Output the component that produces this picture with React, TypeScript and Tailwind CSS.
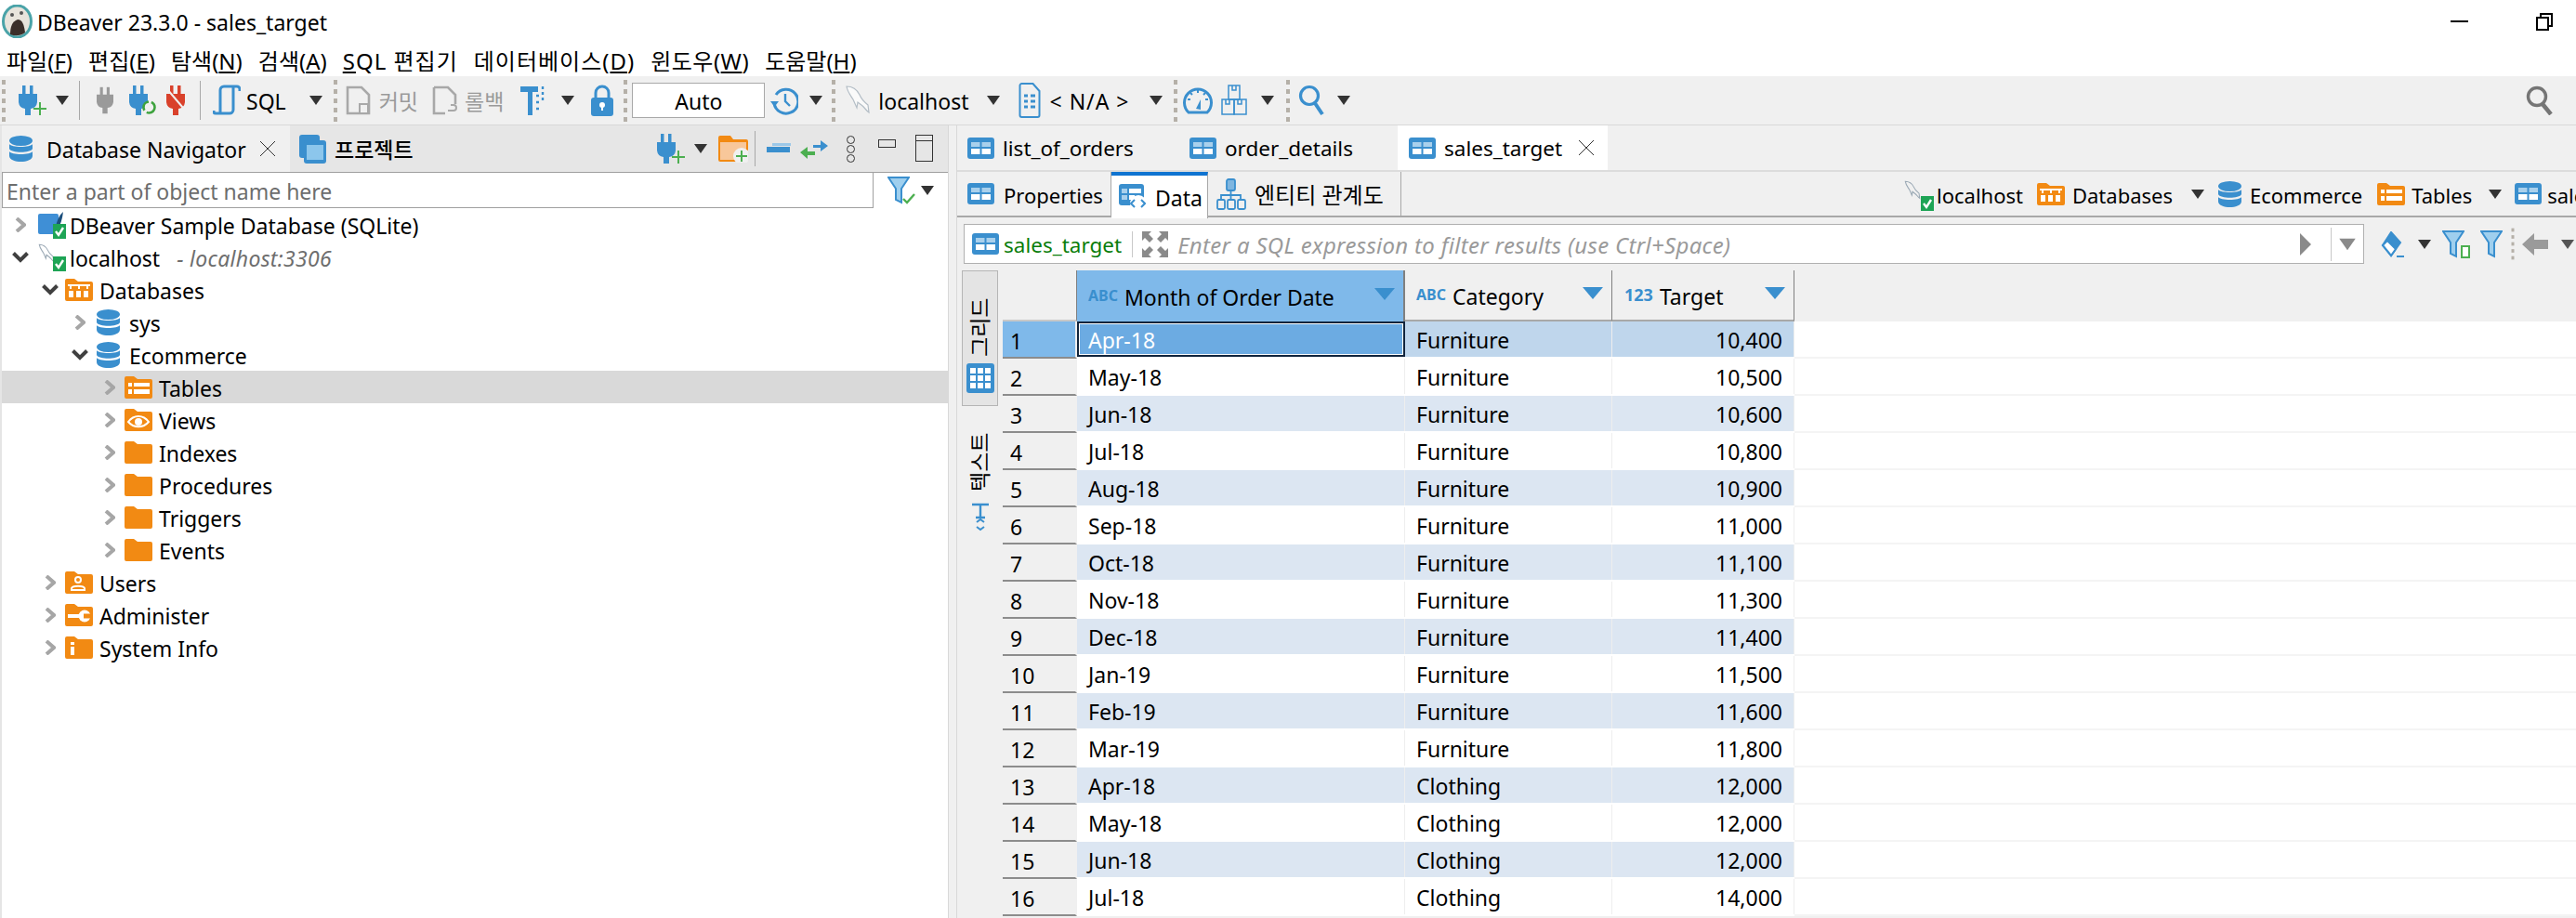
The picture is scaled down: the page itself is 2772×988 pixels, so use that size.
import React from 'react';

// --- small drawn icons ---
const Caret = ({ className = '', color = '#333' }: { className?: string; color?: string }) => (
  <svg width="16" height="12" viewBox="0 0 16 12" className={`shrink-0 ${className}`}>
    <path d="M1 1h14L8 11z" fill={color} />
  </svg>
);

const Grip = ({ className = '' }: { className?: string }) => (
  <div className={`flex flex-col gap-[5px] shrink-0 ${className}`}>
    {[0, 1, 2, 3, 4].map((i) => (
      <div key={i} className="w-[4px] h-[5px] bg-[#b5b0a8]" />
    ))}
  </div>
);

const Sep = ({ className = '' }: { className?: string }) => (
  <div className={`w-px h-[42px] bg-[#a8a8a8] shrink-0 ${className}`} />
);

const TableIcon = ({ className = '' }: { className?: string }) => (
  <svg width="29" height="23" viewBox="0 0 29 23" className={`shrink-0 ${className}`}>
    <rect width="29" height="23" rx="3" fill="#3a8fce" />
    <rect x="4" y="5" width="9.5" height="5" fill="#a9d0ec" />
    <rect x="15.5" y="5" width="9.5" height="5" fill="#a9d0ec" />
    <rect x="4" y="12" width="9.5" height="6" fill="#fff" />
    <rect x="15.5" y="12" width="9.5" height="6" fill="#fff" />
  </svg>
);

const DbStack = ({ className = '' }: { className?: string }) => (
  <svg width="25" height="28" viewBox="0 0 25 28" className={`shrink-0 ${className}`}>
    <ellipse cx="12.5" cy="5.5" rx="12.5" ry="5.5" fill="#3a8fce" />
    <path d="M0 9c2 4 23 4 25 0v5c-2 5-23 5-25 0z" fill="#3a8fce" />
    <path d="M0 17c2 4 23 4 25 0v5c-1 8-24 8-25 0z" fill="#3a8fce" />
  </svg>
);

const Plug = ({ color = '#3a8fce', className = '' }: { color?: string; className?: string }) => (
  <svg width="20" height="32" viewBox="0 0 20 32" className={`shrink-0 ${className}`}>
    <rect x="4" y="0" width="3.5" height="10" fill={color} />
    <rect x="12" y="0" width="3.5" height="10" fill={color} />
    <path d="M0 9h20v9a8 8 0 01-7 7v7H7v-7a8 8 0 01-7-7z" fill={color} />
  </svg>
);

const Dolphin = ({ className = '' }: { className?: string }) => (
  <svg width="28" height="34" viewBox="0 0 28 34" fill="none" className={`shrink-0 ${className}`}>
    <path d="M2 2c6 0 11 3 14 9 2 5 4 7 9 11l1 8c-3-2-5-6-8-8l-4-3-1 6-4-9C6 11 3 8 2 2z" stroke="#9aa8b4" strokeWidth="1.2" fill="#fff" />
  </svg>
);

const GreenBadge = ({ className = '' }: { className?: string }) => (
  <svg width="14" height="16" viewBox="0 0 14 16" className={`absolute ${className}`}>
    <rect width="14" height="16" fill="#1ea455" />
    <path d="M3 8l3 4 5-8" stroke="#fff" strokeWidth="2.4" fill="none" />
  </svg>
);

const Folder = ({ children }: { children?: React.ReactNode }) => (
  <svg width="30" height="24" viewBox="0 0 30 24" className="shrink-0">
    <path d="M0 2a2 2 0 012-2h8l4 3h14a2 2 0 012 2v17a2 2 0 01-2 2H2a2 2 0 01-2-2z" fill="#f28a13" />
    {children}
  </svg>
);

const FolderInner: Record<string, React.ReactNode> = {
  databases: (
    <g fill="#fff">
      <rect x="3" y="6" width="24" height="2" />
      <rect x="5" y="8" width="2" height="3" />
      <rect x="14" y="8" width="2" height="3" />
      <rect x="23" y="8" width="2" height="3" />
      <rect x="4" y="13" width="5" height="7" />
      <rect x="12" y="13" width="5" height="7" />
      <rect x="20" y="13" width="5" height="7" />
    </g>
  ),
  tables: (
    <g fill="#fff">
      <rect x="4" y="7" width="4" height="4" />
      <rect x="10" y="7" width="17" height="4" />
      <rect x="4" y="14" width="4" height="5" />
      <rect x="10" y="14" width="17" height="5" />
    </g>
  ),
  views: (
    <g fill="none" stroke="#fff" strokeWidth="2">
      <path d="M4 14c6-8 16-8 22 0-6 7-16 7-22 0z" />
      <circle cx="15" cy="14" r="3" fill="#fff" />
    </g>
  ),
  users: (
    <g fill="none" stroke="#fff" strokeWidth="2">
      <circle cx="14" cy="9" r="3" />
      <path d="M7 20v-2c1-3 13-3 14 0v2z" />
    </g>
  ),
  admin: (
    <g>
      <rect x="3" y="11" width="14" height="4" fill="#fff" />
      <circle cx="21" cy="13" r="6.5" fill="#fff" />
      <rect x="20" y="10.5" width="10" height="5" fill="#f28a13" />
    </g>
  ),
  info: (
    <g fill="#fff">
      <rect x="6" y="6" width="4" height="3" />
      <rect x="6" y="11" width="4" height="9" />
    </g>
  ),
};

const ChevronR = () => (
  <svg width="12" height="16" viewBox="0 0 12 16" fill="none" className="shrink-0 ml-[2px]">
    <path d="M2 1l8 7-8 7" stroke="#a6a6a6" strokeWidth="4" />
  </svg>
);

const ChevronD = () => (
  <svg width="18" height="12" viewBox="0 0 18 12" fill="none" className="shrink-0 -ml-[1px]">
    <path d="M1.5 1.5L9 9l7.5-7.5" stroke="#404040" strokeWidth="4" />
  </svg>
);

const FilterIcon = ({ className = '' }: { className?: string }) => (
  <svg width="24" height="30" viewBox="0 0 24 30" className={`shrink-0 ${className}`}>
    <path d="M1 1h22l-8 12v15l-6-3V13z" fill="#9fcfee" stroke="#3a8fce" strokeWidth="2" />
  </svg>
);

const Mnem = ({ label, k, className = '' }: { label: string; k: string; className?: string }) => (
  <span className={`whitespace-nowrap ${className}`}>
    {label}(<span className="underline underline-offset-2">{k}</span>)
  </span>
);

// --- tree data ---
type Node = { label: string; level: number; open?: boolean; kind: string; selected?: boolean; sub?: string };
const tree: Node[] = [
  { label: 'DBeaver Sample Database (SQLite)', level: 1, kind: 'sqlite' },
  { label: 'localhost', level: 1, open: true, kind: 'mysql', sub: '- localhost:3306' },
  { label: 'Databases', level: 2, open: true, kind: 'databases' },
  { label: 'sys', level: 3, kind: 'db' },
  { label: 'Ecommerce', level: 3, open: true, kind: 'db' },
  { label: 'Tables', level: 4, kind: 'tables', selected: true },
  { label: 'Views', level: 4, kind: 'views' },
  { label: 'Indexes', level: 4, kind: 'plain' },
  { label: 'Procedures', level: 4, kind: 'plain' },
  { label: 'Triggers', level: 4, kind: 'plain' },
  { label: 'Events', level: 4, kind: 'plain' },
  { label: 'Users', level: 2, kind: 'users' },
  { label: 'Administer', level: 2, kind: 'admin' },
  { label: 'System Info', level: 2, kind: 'info' },
];

const indent: Record<number, string> = { 1: 'pl-[12px]', 2: 'pl-[44px]', 3: 'pl-[76px]', 4: 'pl-[108px]' };

const rows: [string, string, string][] = [
  ['Apr-18', 'Furniture', '10,400'],
  ['May-18', 'Furniture', '10,500'],
  ['Jun-18', 'Furniture', '10,600'],
  ['Jul-18', 'Furniture', '10,800'],
  ['Aug-18', 'Furniture', '10,900'],
  ['Sep-18', 'Furniture', '11,000'],
  ['Oct-18', 'Furniture', '11,100'],
  ['Nov-18', 'Furniture', '11,300'],
  ['Dec-18', 'Furniture', '11,400'],
  ['Jan-19', 'Furniture', '11,500'],
  ['Feb-19', 'Furniture', '11,600'],
  ['Mar-19', 'Furniture', '11,800'],
  ['Apr-18', 'Clothing', '12,000'],
  ['May-18', 'Clothing', '12,000'],
  ['Jun-18', 'Clothing', '12,000'],
  ['Jul-18', 'Clothing', '14,000'],
];

const TreeRow = ({ n }: { n: Node }) => (
  <div className={`h-[35px] flex items-center ${indent[n.level]} ${n.selected ? 'bg-[#d9d9d9]' : ''}`}>
    <div className="w-[24px] flex shrink-0">{n.open ? <ChevronD /> : <ChevronR />}</div>
    {n.kind === 'sqlite' && (
      <div className="relative w-[30px] h-[30px] ml-[3px] shrink-0">
        <svg width="28" height="26" viewBox="0 0 28 26">
          <rect y="3" width="22" height="22" rx="2" fill="#3f8fd6" />
          <path d="M18 20c2-8 4-15 9-19-1 8-3 14-6 19z" fill="#1c4f7c" />
        </svg>
        <GreenBadge className="right-0 bottom-0" />
      </div>
    )}
    {n.kind === 'mysql' && (
      <div className="relative w-[30px] h-[30px] ml-[3px] shrink-0">
        <svg width="18" height="22" viewBox="0 0 28 34" fill="none">
          <path d="M2 2c6 0 11 3 14 9 2 5 4 7 9 11l1 8c-3-2-5-6-8-8l-4-3-1 6-4-9C6 11 3 8 2 2z" stroke="#9aa8b4" strokeWidth="1.6" />
        </svg>
        <GreenBadge className="right-0 bottom-0" />
      </div>
    )}
    {n.kind === 'db' && <DbStack className="ml-[2px]" />}
    {['databases', 'tables', 'views', 'users', 'admin', 'info'].includes(n.kind) && (
      <Folder>{FolderInner[n.kind]}</Folder>
    )}
    {n.kind === 'plain' && <Folder />}
    <span className={`whitespace-nowrap ${n.level === 3 ? 'ml-[10px]' : n.level === 1 ? 'ml-[4px]' : 'ml-[7px]'}`}>{n.label}</span>
    {n.sub && <span className="ml-[18px] italic tracking-[0.3px] text-[#6e6e6e] whitespace-nowrap">{n.sub}</span>}
  </div>
);

export default function App() {
  return (
    <div className="w-[2772px] h-[988px] overflow-hidden flex flex-col bg-white text-[23px] leading-none text-black font-['Noto_Sans','Noto_Sans_CJK_KR',sans-serif] [&_span]:pt-[3px]">
      {/* Title bar */}
      <div className="h-[46px] flex items-center shrink-0 pl-[2px]">
        <svg width="33" height="36" viewBox="0 0 33 36" className="shrink-0">
          <ellipse cx="16.5" cy="18" rx="15" ry="17" fill="#e8e4dc" stroke="#4aa3a8" strokeWidth="3" />
          <path d="M9 32c0-8 2-14 8-16 5 0 7 6 8 14-5 4-11 4-16 2z" fill="#3b2f2a" />
          <circle cx="11" cy="11" r="2" fill="#555" />
          <circle cx="21" cy="9" r="2" fill="#555" />
        </svg>
        <span className="ml-[5px]">DBeaver 23.3.0 - sales_target</span>
        <div className="flex-1" />
        <div className="w-[19px] h-[2px] bg-black" />
        <div className="relative w-[18px] h-[19px] ml-[73px] mr-[25px]">
          <div className="absolute top-0 right-0 w-[14px] h-[15px] border-2 border-black" />
          <div className="absolute bottom-0 left-0 w-[14px] h-[15px] border-2 border-black bg-white" />
        </div>
      </div>

      {/* Menu bar */}
      <div className="h-[36px] flex items-center gap-[17px] pl-[7px] shrink-0 text-[24px]">
        <Mnem label="파일" k="F" />
        <Mnem label="편집" k="E" />
        <Mnem label="탐색" k="N" />
        <Mnem label="검색" k="A" />
        <span className="whitespace-nowrap tracking-[1px]"><span className="underline underline-offset-2">S</span>QL 편집기</span>
        <Mnem label="데이터베이스" k="D" className="tracking-[1px]" />
        <Mnem label="윈도우" k="W" className="tracking-[0.5px]" />
        <Mnem label="도움말" k="H" />
      </div>

      {/* Main toolbar */}
      <div className="h-[53px] flex items-center bg-[#f0f0f0] border-b border-[#d8d8d8] shrink-0">
        <Grip className="ml-[2px]" />
        <div className="relative ml-[14px] w-[30px] h-[32px]">
          <Plug />
          <svg width="14" height="14" viewBox="0 0 14 14" className="absolute right-0 bottom-0">
            <path d="M7 0v14M0 7h14" stroke="#4caf50" strokeWidth="2" />
          </svg>
        </div>
        <Caret className="ml-[9px]" />
        <Sep className="ml-[10px]" />
        <Plug color="#9a9a9a" className="ml-[17px] scale-90" />
        <div className="relative ml-[16px] w-[30px] h-[32px]">
          <Plug />
          <svg width="17" height="17" viewBox="0 0 17 17" fill="none" className="absolute right-0 bottom-0">
            <circle cx="8.5" cy="8.5" r="6" stroke="#3ea33e" strokeWidth="2.6" strokeDasharray="12 3" fill="#f0f0f0" />
          </svg>
        </div>
        <div className="relative ml-[10px] w-[24px] h-[32px]">
          <Plug color="#d9412b" />
          <svg width="24" height="32" viewBox="0 0 24 32" fill="none" className="absolute inset-0">
            <path d="M1 4l22 26" stroke="#f0f0f0" strokeWidth="2" />
          </svg>
        </div>
        <Sep className="ml-[12px]" />
        <svg width="30" height="34" viewBox="0 0 30 34" fill="none" className="ml-[13px] shrink-0">
          <path d="M8 31V6a4 4 0 014-4h14a3 3 0 013 3v2M22 3v24a4 4 0 01-4 4H3a2 2 0 01-2-2v-1" stroke="#3a8fce" strokeWidth="3" />
        </svg>
        <span className="ml-[6px]">SQL</span>
        <Caret className="ml-[24px]" />
        <Grip className="ml-[11px]" />
        <svg width="27" height="32" viewBox="0 0 27 32" fill="none" className="ml-[9px] shrink-0">
          <path d="M2 2h15l8 8v20H2z" stroke="#a8a8a8" strokeWidth="2.6" />
          <rect x="15" y="20" width="9" height="10" fill="#f0f0f0" stroke="#a8a8a8" strokeWidth="2" />
        </svg>
        <span className="ml-[9px] text-[#9a9a9a]">커밋</span>
        <svg width="28" height="32" viewBox="0 0 28 32" fill="none" className="ml-[15px] shrink-0">
          <path d="M2 2h15l8 8v10M2 2v28h12" stroke="#a8a8a8" strokeWidth="2.6" />
          <path d="M17 27h6a3 3 0 000-6h-3" stroke="#a8a8a8" strokeWidth="2" />
        </svg>
        <span className="ml-[7px] text-[#9a9a9a]">롤백</span>
        <svg width="29" height="34" viewBox="0 0 29 34" className="ml-[18px] shrink-0">
          <path d="M0 2h19v6h-6v25H8V8H0z" fill="#3a8fce" />
          <path d="M17 12h3M24 2v3M24 8v3M24 14v3M17 19h3M17 26h3" stroke="#3a8fce" strokeWidth="2.4" />
        </svg>
        <Caret className="ml-[14px]" />
        <svg width="24" height="34" viewBox="0 0 24 34" className="ml-[17px] shrink-0">
          <path d="M5 15V9a7 7 0 0114 0v6" fill="none" stroke="#3a8fce" strokeWidth="3" />
          <rect y="14" width="24" height="20" rx="3" fill="#3a8fce" />
          <circle cx="12" cy="22" r="3" fill="#fff" />
          <rect x="11" y="23" width="2" height="5" fill="#fff" />
        </svg>
        <Grip className="ml-[11px]" />
        <div className="ml-[5px] w-[143px] h-[38px] pt-[3px] bg-white border border-[#a8a8a8] flex items-center justify-center shrink-0">Auto</div>
        <svg width="30" height="32" viewBox="0 0 30 32" fill="none" className="ml-[6px] shrink-0">
          <path d="M6 10a13 13 0 11-2 9" stroke="#3a8fce" strokeWidth="3" />
          <path d="M0 17h9l-4.500 6z" fill="#3a8fce" />
          <path d="M16 9v8l5 5" stroke="#3a8fce" strokeWidth="2.4" />
        </svg>
        <Caret className="ml-[11px]" />
        <Grip className="ml-[9px]" />
        <Dolphin className="ml-[10px] opacity-70" />
        <span className="ml-[8px]">localhost</span>
        <Caret className="ml-[18px]" />
        <svg width="24" height="38" viewBox="0 0 24 38" fill="none" className="ml-[19px] shrink-0">
          <path d="M1.500 3a2 2 0 012-2h12l7 8v26a2 2 0 01-2 2h-17a2 2 0 01-2-2z" stroke="#3a8fce" strokeWidth="2" />
          <path d="M6 14h4M13 14h5M6 20h4M13 20h5M6 26h4M13 26h5" stroke="#3a8fce" strokeWidth="3" />
        </svg>
        <span className="ml-[10px] whitespace-pre tracking-[1px]">{'< N/A >'}</span>
        <Caret className="ml-[20px]" />
        <Grip className="ml-[11px]" />
        <svg width="32" height="30" viewBox="0 0 32 30" fill="none" className="ml-[6px] shrink-0">
          <path d="M6 28a14.500 14.500 0 1120 0z" stroke="#3a8fce" strokeWidth="3" />
          <path d="M14 24l5-10 0 11z" fill="#3a8fce" />
          <path d="M16 4v3M5 14h3M24 14h3M8 7l2 2M24 7l-2 2" stroke="#3a8fce" strokeWidth="2" />
        </svg>
        <svg width="28" height="34" viewBox="0 0 28 34" fill="none" stroke="#3a8fce" strokeWidth="1.5" className="ml-[9px] shrink-0">
          <rect x="8" y="1" width="12" height="15" />
          <rect x="1" y="16" width="13" height="16" />
          <rect x="14" y="16" width="13" height="16" />
          <path d="M12 1v5h4V1M5 16v5h4v-5M18 16v5h4v-5" />
        </svg>
        <Caret className="ml-[14px]" />
        <Grip className="ml-[12px]" />
        <svg width="28" height="34" viewBox="0 0 28 34" fill="none" stroke="#3a8fce" className="ml-[9px] shrink-0">
          <circle cx="12" cy="12" r="9.500" strokeWidth="3.200" />
          <path d="M18 20l8 12" strokeWidth="4" />
        </svg>
        <Caret className="ml-[13px]" />
        <div className="flex-1" />
        <svg width="30" height="32" viewBox="0 0 30 32" fill="none" stroke="#757575" className="mr-[24px] shrink-0">
          <circle cx="12" cy="12" r="9.500" strokeWidth="3.400" />
          <path d="M18 20l9 11" strokeWidth="4.500" />
        </svg>
      </div>

      <div className="flex-1 flex min-h-0">
        {/* Left navigator */}
        <div className="w-[1021px] shrink-0 flex flex-col border-r border-[#d8d8d8] border-l-2 border-l-[#e5e5e5]">
          <div className="h-[51px] shrink-0 flex items-center bg-[#e6e6e6] border-b border-[#a0a0a0]">
            <div className="w-[310px] h-full bg-[#f0f0f0] flex items-center shrink-0">
              <DbStack className="ml-[8px]" />
              <span className="ml-[15px]">Database Navigator</span>
              <svg width="18" height="18" viewBox="0 0 18 18" className="ml-[14px]">
                <path d="M1 1l16 16M17 1L1 17" stroke="#333" strokeWidth="1" />
              </svg>
            </div>
            <svg width="29" height="31" viewBox="0 0 29 31" className="ml-[10px] shrink-0">
              <rect x="0" y="0" width="22" height="25" rx="3" fill="#3a8fce" />
              <rect x="5" y="6" width="24" height="25" rx="3" fill="#3a8fce" />
              <rect x="8" y="11" width="18" height="16" fill="#8cc6ec" />
            </svg>
            <span className="ml-[9px] font-medium">프로젝트</span>
            <div className="flex-1" />
            <div className="relative w-[30px] h-[32px] shrink-0">
              <Plug />
              <svg width="14" height="14" viewBox="0 0 14 14" className="absolute right-0 bottom-0">
                <path d="M7 0v14M0 7h14" stroke="#4caf50" strokeWidth="2" />
              </svg>
            </div>
            <Caret className="ml-[9px]" />
            <div className="relative ml-[11px] w-[32px] h-[30px] shrink-0">
              <svg width="32" height="30" viewBox="0 0 32 30">
                <path d="M0 3a2 2 0 012-2h11l3 4h14a2 2 0 012 2v20a2 2 0 01-2 2H2a2 2 0 01-2-2z" fill="#f28a13" />
                <rect x="2" y="8" width="28" height="19" fill="#f8c79a" />
                <circle cx="25" cy="23" r="9" fill="#f0f0f0" />
                <path d="M25 17v12M19 23h12" stroke="#4caf50" strokeWidth="2" />
              </svg>
            </div>
            <div className="ml-[7px] w-px h-[38px] bg-[#a8a8a8]" />
            <svg width="26" height="12" viewBox="0 0 26 12" className="ml-[12px] shrink-0">
              <rect y="4" width="25" height="6" fill="#3a8fce" />
              <rect x="6" y="0" width="20" height="3" fill="#9cc8e8" />
            </svg>
            <svg width="30" height="24" viewBox="0 0 30 24" className="ml-[10px] shrink-0">
              <path d="M14 8h8V3l8 6-8 6v-4h-8z" fill="#3a8fce" />
              <path d="M16 15H8v-5L0 16l8 7v-4h8z" fill="#4caf50" />
            </svg>
            <div className="ml-[20px] flex flex-col gap-[1px] shrink-0">
              {[0, 1, 2].map((i) => (
                <div key={i} className="w-[9px] h-[9px] rounded-full border border-[#333]" />
              ))}
            </div>
            <div className="ml-[25px] mb-[12px] w-[19px] h-[9px] border border-[#333] shrink-0" />
            <div className="ml-[21px] mb-[2px] mr-[16px] w-[19px] h-[29px] border border-[#333] shrink-0">
              <div className="h-[6px] border-b border-[#333]" />
            </div>
          </div>
          <div className="h-[38px] shrink-0 flex items-center">
            <div className="w-[938px] h-full bg-white border border-[#a0a0a0] border-t-0 flex items-center pl-[4px] pt-[3px] text-[#6d6d6d] shrink-0">
              Enter a part of object name here
            </div>
            <div className="relative ml-[15px] w-[30px] h-[30px] shrink-0">
              <FilterIcon />
              <svg width="14" height="12" viewBox="0 0 14 12" fill="none" className="absolute right-0 bottom-0">
                <path d="M1 6l4 4 8-9" stroke="#4caf50" strokeWidth="2.400" />
              </svg>
            </div>
            <Caret className="ml-[5px]" />
          </div>
          <div className="flex-1 bg-white">
            {tree.map((n) => (
              <TreeRow key={n.label} n={n} />
            ))}
          </div>
        </div>

        <div className="w-[8px] shrink-0 bg-[#f0f0f0]" />

        {/* Right editor */}
        <div className="flex-1 min-w-0 flex flex-col bg-[#f0f0f0] border-l border-[#d8d8d8]">
          <div className="h-[50px] shrink-0 flex border-b-2 border-[#dcdcdc] text-[22.500px]">
            <div className="flex items-center pl-[11px] w-[250px] shrink-0">
              <TableIcon />
              <span className="ml-[9px]">list_of_orders</span>
            </div>
            <div className="flex items-center w-[224px] shrink-0">
              <TableIcon />
              <span className="ml-[9px]">order_details</span>
            </div>
            <div className="flex items-center bg-white w-[226px] pl-[12px] shrink-0">
              <TableIcon />
              <span className="ml-[9px] w-[132px]">sales_target</span>
              <svg width="18" height="18" viewBox="0 0 18 18" className="ml-[12px]">
                <path d="M1 1l16 16M17 1L1 17" stroke="#333" strokeWidth="1" />
              </svg>
            </div>
          </div>
          <div className="h-[49px] shrink-0 flex border-b-2 border-[#a8a8a8] whitespace-nowrap">
            <div className="flex items-center pl-[11px] w-[166px] shrink-0 border-r border-[#a8a8a8] text-[22px]">
              <TableIcon />
              <span className="ml-[10px]">Properties</span>
            </div>
            <div className="flex items-center pl-[8px] w-[104px] h-[50px] shrink-0 bg-white border-r border-[#a8a8a8] border-t-4 border-t-[#0f74d1]">
              <svg width="29" height="28" viewBox="0 0 29 28" className="shrink-0">
                <rect width="27" height="23" rx="3" fill="#3a8fce" />
                <rect x="11" y="5" width="13" height="5" fill="#fff" />
                <rect x="11" y="12" width="6" height="5" fill="#fff" />
                <rect x="3" y="5" width="6" height="5" fill="#a9d0ec" />
                <rect x="3" y="12" width="6" height="5" fill="#a9d0ec" />
                <circle cx="21" cy="21" r="9" fill="#fff" />
                <path d="M17 17l-4 4 4 4M24 17l4 4-4 4" stroke="#3a8fce" strokeWidth="2" fill="none" />
              </svg>
              <span className="ml-[10px]">Data</span>
            </div>
            <div className="flex items-center pl-[9px] w-[208px] shrink-0 border-r border-[#a8a8a8]">
              <svg width="32" height="34" viewBox="0 0 32 34" fill="none" stroke="#3a8fce" strokeWidth="1.800" className="shrink-0">
                <rect x="11" y="1" width="9" height="12" rx="2" fill="#7fb6e0" />
                <path d="M15.500 13v5M5 23v-5h21v5M15.500 18v5" />
                <rect x="1" y="23" width="8" height="10" rx="1.500" />
                <rect x="12" y="23" width="8" height="10" rx="1.500" />
                <rect x="23" y="23" width="8" height="10" rx="1.500" />
              </svg>
              <span className="ml-[9px] text-[24px]">엔티티 관계도</span>
            </div>
            <div className="flex-1 flex items-center justify-end min-w-0 overflow-hidden text-[22px]">
              <div className="flex items-center w-[723px] shrink-0">
                <div className="relative w-[33px] h-[36px] shrink-0">
                  <svg width="18" height="28" viewBox="0 0 28 34" fill="none">
                    <path d="M2 2c6 0 11 3 14 9 2 5 4 7 9 11l1 8c-3-2-5-6-8-8l-4-3-1 6-4-9C6 11 3 8 2 2z" stroke="#9aa8b4" strokeWidth="1.600" />
                  </svg>
                  <GreenBadge className="right-[1px] bottom-0" />
                </div>
                <span className="ml-[2px]">localhost</span>
                <div className="ml-[15px]"><Folder>{FolderInner.databases}</Folder></div>
                <span className="ml-[8px]">Databases</span>
                <Caret className="ml-[19px]" />
                <DbStack className="ml-[14px]" />
                <span className="ml-[9px]">Ecommerce</span>
                <div className="ml-[16px]"><Folder>{FolderInner.tables}</Folder></div>
                <span className="ml-[7px]">Tables</span>
                <Caret className="ml-[17px]" />
                <TableIcon className="ml-[13px]" />
                <span className="ml-[6px]">sales_target</span>
              </div>
            </div>
          </div>

          {/* Filter row */}
          <div className="h-[57px] shrink-0 flex items-center pl-[7px] whitespace-nowrap">
            <div className="w-[1507px] h-[43px] bg-white border border-[#b0b0b0] flex items-center pl-[8px] shrink-0">
              <TableIcon />
              <span className="ml-[5px] text-[#0a7d0a] text-[22.500px]">sales_target</span>
              <div className="ml-[11px] w-px h-[28px] bg-[#c8c8c8]" />
              <svg width="30" height="30" viewBox="0 0 30 30" className="ml-[9px] shrink-0" fill="#8a8a8a">
                <path d="M1 1h10l-3 3 5 5-4 4-5-5-3 3zM29 1H19l3 3-5 5 4 4 5-5 3 3zM1 29h10l-3-3 5-5-4-4-5 5-3-3zM29 29H19l3-3-5-5 4-4 5 5 3-3z" />
              </svg>
              <span className="ml-[9px] italic text-[24px] tracking-[0.3px] text-[#9a9a9a] flex-1 min-w-0">Enter a SQL expression to filter results (use Ctrl+Space)</span>
              <svg width="12" height="24" viewBox="0 0 12 24" className="shrink-0"><path d="M0 0l12 12L0 24z" fill="#8a8a8a" /></svg>
              <div className="ml-[21px] w-px h-[36px] bg-[#c8c8c8]" />
              <Caret color="#8a8a8a" className="ml-[9px] mr-[9px] scale-125" />
            </div>
            <svg width="28" height="28" viewBox="0 0 28 28" fill="none" className="ml-[17px] shrink-0">
              <path d="M12 1l10 11-10 14L3 15z" fill="#3a8fce" stroke="#3a8fce" strokeWidth="2" />
              <path d="M3 15l9 11 5-7-9-9z" fill="#fff" stroke="#3a8fce" strokeWidth="2" />
              <path d="M18 27h8" stroke="#3a8fce" strokeWidth="2" />
            </svg>
            <Caret className="ml-[12px]" />
            <div className="relative ml-[11px] w-[30px] h-[30px] shrink-0">
              <FilterIcon />
              <div className="absolute right-0 bottom-0 w-[10px] h-[14px] border-2 border-[#4caf50] bg-white" />
            </div>
            <FilterIcon className="ml-[11px]" />
            <Grip className="ml-[9px] scale-75" />
            <svg width="28" height="26" viewBox="0 0 28 26" className="ml-[8px] shrink-0"><path d="M0 13L13 1v7h15v10H13v7z" fill="#9a9a9a" /></svg>
            <Caret color="#555" className="ml-[13px]" />
          </div>

          {/* Grid area */}
          <div className="flex-1 min-h-0 flex pl-[5px]">
            <div className="w-[44px] shrink-0">
              <div className="w-[39px] h-[146px] bg-[#e4e4e4] border border-[#b5b5b5] flex flex-col items-center pt-[22px]">
                <span className="[writing-mode:vertical-rl] [text-orientation:sideways] rotate-180 h-[73px] whitespace-nowrap">그리드</span>
                <svg width="30" height="32" viewBox="0 0 30 32" className="mt-[4px]">
                  <rect width="30" height="32" rx="3" fill="#3a8fce" />
                  <g fill="#fff">
                    <rect x="4" y="5" width="6" height="6" /><rect x="12" y="5" width="6" height="6" /><rect x="20" y="5" width="6" height="6" />
                    <rect x="4" y="13" width="6" height="6" /><rect x="12" y="13" width="6" height="6" /><rect x="20" y="13" width="6" height="6" />
                    <rect x="4" y="21" width="6" height="6" /><rect x="12" y="21" width="6" height="6" /><rect x="20" y="21" width="6" height="6" />
                  </g>
                </svg>
              </div>
              <div className="w-[39px] flex flex-col items-center mt-[27px]">
                <span className="[writing-mode:vertical-rl] [text-orientation:sideways] rotate-180 h-[68px] whitespace-nowrap">텍스트</span>
                <svg width="20" height="32" viewBox="0 0 20 32" fill="none" stroke="#3a8fce" strokeWidth="2.400" className="mt-[8px]">
                  <path d="M1 3h18M10 3v14M5 17h10" />
                  <path d="M6 22l4-3 4 3M6 27l4 3 4-3" strokeWidth="2" />
                </svg>
              </div>
            </div>

            <div className="flex-1 min-w-0 flex flex-col">
              {/* Header */}
              <div className="h-[55px] shrink-0 flex">
                <div className="w-[80px] shrink-0 border-r border-[#808080] border-b-2 border-b-[#c8c8c8]" />
                <div className="w-[353px] shrink-0 bg-[#7fb9ea] border-r-2 border-[#808080] flex items-center pl-[12px] pr-[9px]">
                  <span className="text-[16px] font-bold text-[#3a8fce] mb-[4px]">ABC</span>
                  <span className="ml-[7px]">Month of Order Date</span>
                  <svg width="22" height="13" viewBox="0 0 22 13" className="ml-auto mb-[4px]"><path d="M0 0h22L11 13z" fill="#3a8fce" /></svg>
                </div>
                <div className="w-[223px] shrink-0 border-r border-[#808080] border-b-2 border-b-[#a8a8a8] flex items-center pl-[12px] pr-[9px]">
                  <span className="text-[16px] font-bold text-[#3a8fce] mb-[4px]">ABC</span>
                  <span className="ml-[7px]">Category</span>
                  <svg width="22" height="13" viewBox="0 0 22 13" className="ml-auto mb-[4px]"><path d="M0 0h22L11 13z" fill="#3a8fce" /></svg>
                </div>
                <div className="w-[196px] shrink-0 border-r border-[#808080] border-b-2 border-b-[#a8a8a8] flex items-center pl-[13px] pr-[9px]">
                  <span className="text-[18px] font-bold text-[#3a8fce] mb-[4px]">123</span>
                  <span className="ml-[7px]">Target</span>
                  <svg width="22" height="13" viewBox="0 0 22 13" className="ml-auto mb-[4px]"><path d="M0 0h22L11 13z" fill="#3a8fce" /></svg>
                </div>
              </div>
              {/* Rows */}
              {rows.map((r, i) => {
                const selected = i === 0;
                const stripe = selected ? 'bg-[#bfd6ec]' : i % 2 === 0 ? 'bg-[#dce6f2]' : 'bg-white';
                return (
                  <div key={i} className="h-[40px] shrink-0 flex bg-white">
                    <div className={`w-[80px] shrink-0 flex items-center pl-[8px] pt-[5px] border-b-2 border-[#8c8c8c] border-r-2 border-r-[#f0f0f0] ${selected ? 'bg-[#7fb9ea]' : 'bg-[#f0f0f0]'}`}>
                      {i + 1}
                    </div>
                    {selected ? (
                      <div className="w-[353px] h-[38px] pt-[3px] shrink-0 bg-[#6cabe2] border-2 border-[#10243c] outline-1 outline-white -outline-offset-3 flex items-center pl-[10px] text-white">
                        {r[0]}
                      </div>
                    ) : (
                      <div className={`w-[353px] h-[38px] pt-[3px] shrink-0 flex items-center pl-[12px] border-r border-[#eeeeee] ${stripe}`}>{r[0]}</div>
                    )}
                    <div className={`w-[223px] h-[38px] pt-[3px] shrink-0 flex items-center pl-[12px] border-r border-[#eeeeee] ${stripe}`}>{r[1]}</div>
                    <div className={`w-[196px] h-[38px] pt-[3px] shrink-0 flex items-center justify-end pr-[12px] border-r border-[#eeeeee] ${stripe}`}>{r[2]}</div>
                    <div className="flex-1 h-[40px] border-b-2 border-[#f4f4f4]" />
                  </div>
                );
              })}
            </div>
          </div>
        </div>
      </div>
    </div>
  );
}
